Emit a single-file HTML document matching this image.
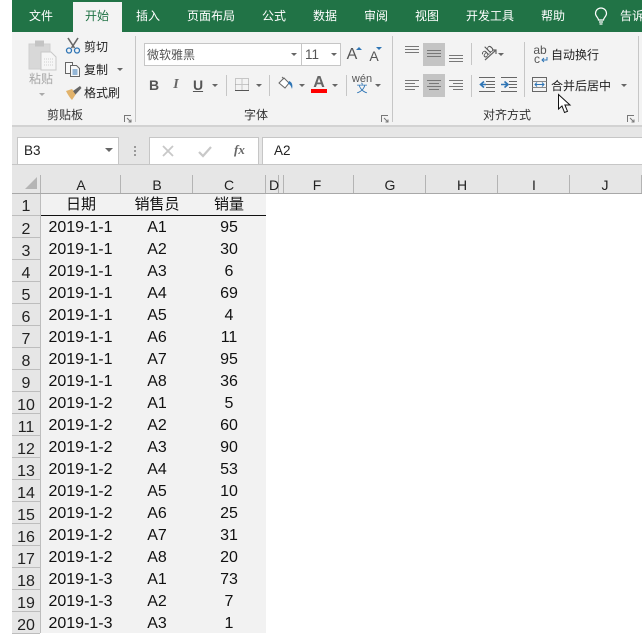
<!DOCTYPE html>
<html lang="zh"><head><meta charset="utf-8"><title>Excel</title>
<style>
html,body{margin:0;padding:0;background:#fff}
body{position:relative;width:642px;height:633px;overflow:hidden;font-family:"Liberation Sans","Noto Sans CJK SC",sans-serif;color:#222}
.a{position:absolute}
.t{position:absolute;white-space:nowrap;font-size:12px;line-height:16px;transform:translateX(-50%)}
.l{position:absolute;white-space:nowrap;font-size:12px;line-height:16px}
.tab{color:#fff;top:8px}
.dd{position:absolute;width:0;height:0;border-left:3px solid transparent;border-right:3px solid transparent;border-top:3px solid #666}
.sep{position:absolute;width:1px;background:#c6c6c6}
.grp{top:107px;color:#333}
.lnc{position:absolute;height:1px;background:#777}
.hl{position:absolute;background:#c4c4c4}
.ch{position:absolute;top:176px;font-size:14px;line-height:18px;transform:translateX(-50%);color:#222}
.cs{position:absolute;top:175px;width:1px;height:18px;background:#b4b4b4}
.rh{position:absolute;left:12px;width:28px;height:21px;background:#e6e6e6;border-bottom:1px solid #bdbdbd;text-align:center;font-size:16px;line-height:20px;color:#222}
.rh span{position:relative;top:4px}
.c{position:absolute;font-size:16px;line-height:22px;margin-top:2px;transform:translateX(-50%);white-space:nowrap;color:#111}
svg{position:absolute;overflow:visible}
</style></head><body>

<!-- title tabs -->
<div class="a" style="left:12px;top:0;width:630px;height:32px;background:#217346"></div>
<div class="a" style="left:73px;top:2px;width:49px;height:31px;background:#f3f3f3"></div>
<div class="t tab" style="left:41px">文件</div>
<div class="t tab" style="left:97px;color:#217346">开始</div>
<div class="t tab" style="left:148px">插入</div>
<div class="t tab" style="left:211px">页面布局</div>
<div class="t tab" style="left:274px">公式</div>
<div class="t tab" style="left:325px">数据</div>
<div class="t tab" style="left:376px">审阅</div>
<div class="t tab" style="left:427px">视图</div>
<div class="t tab" style="left:490px">开发工具</div>
<div class="t tab" style="left:553px">帮助</div>
<svg style="left:594px;top:8px" width="14" height="18" viewBox="0 0 14 18" fill="none" stroke="#fff" stroke-width="1.2"><path d="M4.5 12C4.5 9.5 1.5 8.5 1.5 5.5a5.500 5.500 0 0 1 11 0C12.500 8.500 9.500 9.500 9.500 12Z"/><path d="M5 14h4M5.500 16h3"/></svg>
<div class="l tab" style="left:620px">告诉</div>

<!-- ribbon -->
<div class="a" style="left:12px;top:32px;width:630px;height:93px;background:#f3f3f3"></div>
<div class="a" style="left:12px;top:125px;width:630px;height:2px;background:#d2d2d2"></div>

<!-- clipboard -->
<svg style="left:28px;top:39px" width="30" height="32" viewBox="0 0 30 32"><rect x="1" y="5" width="21" height="25" fill="#d8d8d8" stroke="#cfcfcf"/><rect x="7" y="1.500" width="9" height="6" fill="#c4c4c4"/><path d="M13 13h10l5 5v13H13Z" fill="#f6f6f6" stroke="#c8c8c8"/><path d="M16 20h9M16 23h9M16 26h9" stroke="#d0d0d0" stroke-dasharray="1 1"/></svg>
<div class="t" style="left:41px;top:71px;color:#a6a6a6">粘贴</div>
<div class="dd" style="left:39px;top:93px;border-top-color:#aaa"></div>
<svg style="left:65px;top:37px" width="16" height="17" viewBox="0 0 16 17" fill="none"><path d="M3 1l6.500 10M13 1L6.500 11" stroke="#666" stroke-width="1.600"/><circle cx="4" cy="13.500" r="2.500" stroke="#2f75b5" stroke-width="1.300"/><circle cx="12" cy="13.500" r="2.500" stroke="#2f75b5" stroke-width="1.300"/></svg>
<div class="l" style="left:84px;top:39px">剪切</div>
<svg style="left:65px;top:62px" width="16" height="15" viewBox="0 0 16 15" fill="#f8f8f8" stroke="#666"><path d="M.5.500h7v11h-7Z"/><path d="M5.500 3.500h6l3 3v8h-9Z"/><path d="M7.500 8h5M7.500 10h5M7.500 12h5" stroke="#2f75b5"/></svg>
<div class="l" style="left:84px;top:62px">复制</div>
<div class="dd" style="left:117px;top:68px"></div>
<svg style="left:65px;top:85px" width="17" height="15" viewBox="0 0 17 15"><path d="M1 6l6-2 4 5-4 6C5 13 3 10 1 6Z" fill="#e2b36b"/><path d="M8 6l7-5 1.500 2-6 6.500Z" fill="#666"/></svg>
<div class="l" style="left:84px;top:85px">格式刷</div>
<div class="t grp" style="left:65px">剪贴板</div>
<div class="sep" style="left:135px;top:36px;height:86px"></div>
<svg style="left:124px;top:115px" width="8" height="8" viewBox="0 0 8 8" fill="none" stroke="#777"><path d="M.5 7V.500H7"/><path d="M3 3l4 4M4.500 7H7V4.500"/></svg>

<!-- font -->
<div class="a" style="left:144px;top:43px;width:156px;height:21px;background:#fff;border:1px solid #c6c6c6"></div>
<div class="l" style="left:147px;top:47px;color:#555">微软雅黑</div>
<div class="dd" style="left:291px;top:53px"></div>
<div class="a" style="left:301px;top:43px;width:38px;height:21px;background:#fff;border:1px solid #c6c6c6"></div>
<div class="l" style="left:305px;top:47px;font-size:13.500px;color:#555">11</div>
<div class="dd" style="left:331px;top:53px"></div>
<div class="t" style="left:352px;top:47px;font-size:16px;color:#555">A</div>
<div class="a" style="left:356px;top:47px;width:0;height:0;border-left:3px solid transparent;border-right:3px solid transparent;border-bottom:3px solid #2f75b5"></div>
<div class="t" style="left:374px;top:48px;font-size:14px;color:#555">A</div>
<div class="a" style="left:376px;top:47px;width:0;height:0;border-left:3px solid transparent;border-right:3px solid transparent;border-top:3px solid #2f75b5"></div>
<div class="t" style="left:154px;top:77px;font-size:14px;font-weight:bold;color:#555">B</div>
<div class="t" style="left:176px;top:77px;font-size:14px;font-style:italic;font-family:'Liberation Serif',serif;font-weight:bold;color:#666">I</div>
<div class="t" style="left:198px;top:77px;font-size:14px;font-weight:bold;color:#555;text-decoration:underline">U</div>
<div class="dd" style="left:212px;top:84px"></div>
<div class="sep" style="left:226px;top:75px;height:21px"></div>
<svg style="left:235px;top:78px" width="14" height="13" viewBox="0 0 14 13" fill="none" stroke="#999" stroke-dasharray="1 1"><path d="M.5.500h13v12H.5ZM7 .5v12M.5 6.500h13"/><path d="M0 12.500h14" stroke="#555" stroke-dasharray="none"/></svg>
<div class="dd" style="left:256px;top:84px"></div>
<div class="sep" style="left:269px;top:75px;height:21px"></div>
<svg style="left:278px;top:76px" width="16" height="15" viewBox="0 0 16 15"><path d="M1 7l5-5 5 5-4 5Z" fill="#fff" stroke="#666"/><path d="M4 1l2 2" stroke="#666"/><path d="M11 5c3 1 4 4 3 8-1-3-2-5-4-5Z" fill="#2f75b5"/></svg>
<div class="dd" style="left:299px;top:84px"></div>
<div class="t" style="left:319px;top:75px;font-size:16px;font-weight:bold;color:#666">A</div>
<div class="a" style="left:311px;top:89px;width:16px;height:4px;background:#f00"></div>
<div class="dd" style="left:332px;top:84px"></div>
<div class="sep" style="left:346px;top:75px;height:21px"></div>
<div class="t" style="left:362px;top:73px;font-size:11px;line-height:13px;color:#555">wén</div>
<div class="t" style="left:362px;top:83px;font-size:11px;line-height:13px;color:#2f75b5">文</div>
<div class="dd" style="left:375px;top:84px"></div>
<div class="t grp" style="left:256px">字体</div>
<div class="sep" style="left:392px;top:36px;height:86px"></div>
<svg style="left:381px;top:115px" width="8" height="8" viewBox="0 0 8 8" fill="none" stroke="#777"><path d="M.5 7V.500H7"/><path d="M3 3l4 4M4.500 7H7V4.500"/></svg>

<!-- alignment -->
<div class="hl" style="left:423px;top:43px;width:22px;height:23px"></div>
<div class="hl" style="left:423px;top:74px;width:22px;height:23px"></div>
<div class="lnc" style="left:405px;top:46px;width:14px"></div><div class="lnc" style="left:405px;top:49px;width:14px"></div><div class="lnc" style="left:405px;top:52px;width:14px"></div>
<div class="lnc" style="left:427px;top:50px;width:14px"></div><div class="lnc" style="left:427px;top:53px;width:14px"></div><div class="lnc" style="left:427px;top:56px;width:14px"></div>
<div class="lnc" style="left:449px;top:55px;width:14px"></div><div class="lnc" style="left:449px;top:58px;width:14px"></div><div class="lnc" style="left:449px;top:61px;width:14px"></div>
<div class="lnc" style="left:405px;top:80px;width:14px"></div><div class="lnc" style="left:405px;top:83px;width:10px"></div><div class="lnc" style="left:405px;top:86px;width:14px"></div><div class="lnc" style="left:405px;top:89px;width:10px"></div>
<div class="lnc" style="left:427px;top:80px;width:14px"></div><div class="lnc" style="left:429px;top:83px;width:10px"></div><div class="lnc" style="left:427px;top:86px;width:14px"></div><div class="lnc" style="left:429px;top:89px;width:10px"></div>
<div class="lnc" style="left:449px;top:80px;width:14px"></div><div class="lnc" style="left:453px;top:83px;width:10px"></div><div class="lnc" style="left:449px;top:86px;width:14px"></div><div class="lnc" style="left:453px;top:89px;width:10px"></div>
<div class="sep" style="left:471px;top:43px;height:22px"></div>
<div class="sep" style="left:471px;top:75px;height:22px"></div>
<div class="t" style="left:487px;top:44px;font-size:12px;line-height:14px;color:#555;transform:translateX(-50%) rotate(-45deg)">ab</div>
<svg style="left:484px;top:49px" width="13" height="12" viewBox="0 0 13 12" fill="none" stroke="#666" stroke-width="1.200"><path d="M1 11L12 1M8 1h4v4"/></svg>
<div class="dd" style="left:498px;top:53px"></div>
<svg style="left:479px;top:77px" width="17" height="15" viewBox="0 0 17 15" fill="none"><path d="M0 .500h16M7 4.500h9M7 7.500h9M7 10.500h9M0 14.500h16" stroke="#666"/><path d="M7 7.500H2M5 4.500L1.500 7.500 5 10.500" stroke="#2f75b5" stroke-width="1.600"/></svg>
<svg style="left:501px;top:77px" width="17" height="15" viewBox="0 0 17 15" fill="none"><path d="M0 .500h16M8 4.500h8M8 7.500h8M8 10.500h8M0 14.500h16" stroke="#666"/><path d="M0 7.500h6M3.500 4.500L7 7.500 3.500 10.500" stroke="#2f75b5" stroke-width="1.600"/></svg>
<div class="sep" style="left:524px;top:42px;height:55px"></div>
<div class="t" style="left:540px;top:44px;font-size:12px;line-height:12px;color:#555;letter-spacing:0">ab</div>
<div class="l" style="left:534px;top:53px;font-size:12px;line-height:12px;color:#555">c</div>
<svg style="left:541px;top:57px" width="7" height="6" viewBox="0 0 7 6" fill="none" stroke="#2f75b5"><path d="M6 0v3H1M3 1L1 3l2 2"/></svg>
<div class="l" style="left:551px;top:47px">自动换行</div>
<svg style="left:532px;top:77px" width="16" height="15" viewBox="0 0 16 15" fill="none"><rect x=".5" y=".5" width="14" height="14" stroke="#666"/><path d="M.5 4.500h14M.5 10.500h14" stroke="#888"/><path d="M3 7.500h9M5 5.500l-2 2 2 2M10 5.500l2 2-2 2" stroke="#2f75b5"/></svg>
<div class="l" style="left:551px;top:78px">合并后居中</div>
<div class="dd" style="left:621px;top:84px"></div>
<div class="t grp" style="left:507px">对齐方式</div>
<svg style="left:627px;top:115px" width="8" height="8" viewBox="0 0 8 8" fill="none" stroke="#777"><path d="M.5 7V.500H7"/><path d="M3 3l4 4M4.500 7H7V4.500"/></svg>
<div class="sep" style="left:638px;top:36px;height:86px"></div>
<!-- cursor -->
<svg style="left:558px;top:94px" width="14" height="20" viewBox="0 0 14 20"><path d="M.5.500V15l3.500-3 2.500 6.500 3-1.200-2.600-6.300H12Z" fill="#fff" stroke="#111"/></svg>

<!-- formula bar -->
<div class="a" style="left:12px;top:127px;width:630px;height:50px;background:#e6e6e6"></div>
<div class="a" style="left:17px;top:137px;width:100px;height:26px;background:#fff;border:1px solid #c6c6c6"></div>
<div class="l" style="left:24px;top:143px;font-size:13.500px;color:#222">B3</div>
<div class="dd" style="left:105px;top:148px;border-left-width:4px;border-right-width:4px;border-top-width:4px"></div>
<div class="a" style="left:134px;top:146px;width:2px;height:2px;background:#999;box-shadow:0 4px #999,0 8px #999"></div>
<div class="a" style="left:149px;top:137px;width:108px;height:26px;background:#fff;border:1px solid #c6c6c6"></div>
<svg style="left:162px;top:145px" width="12" height="12" viewBox="0 0 12 12" stroke="#c8c8c8" stroke-width="1.800"><path d="M1 1l10 10M11 1L1 11"/></svg>
<svg style="left:198px;top:146px" width="14" height="11" viewBox="0 0 14 11" fill="none" stroke="#c8c8c8" stroke-width="2.200"><path d="M1 6l4 4 8-9"/></svg>
<div class="l" style="left:234px;top:142px;font-family:'Liberation Serif',serif;font-style:italic;font-weight:bold;font-size:13px;color:#666">fx</div>
<div class="a" style="left:262px;top:137px;width:385px;height:26px;background:#fff;border:1px solid #c6c6c6"></div>
<div class="l" style="left:274px;top:143px;font-size:13.500px;color:#222">A2</div>
<div class="a" style="left:12px;top:164px;width:630px;height:1px;background:#c6c6c6"></div>

<!-- column headers -->
<div class="a" style="left:12px;top:165px;width:630px;height:28px;background:#e6e6e6"></div>
<div class="a" style="left:12px;top:164px;width:630px;height:1px;background:#c6c6c6"></div>
<div class="a" style="left:12px;top:193px;width:630px;height:1px;background:#a8a8a8"></div>
<svg style="left:25px;top:177px" width="12" height="12" viewBox="0 0 12 12"><path d="M12 0V12H0Z" fill="#b5b5b5"/></svg>
<div class="cs" style="left:40px"></div><div class="cs" style="left:120px"></div><div class="cs" style="left:192px"></div><div class="cs" style="left:265px"></div><div class="cs" style="left:278px"></div><div class="cs" style="left:283px"></div><div class="cs" style="left:353px"></div><div class="cs" style="left:425px"></div><div class="cs" style="left:497px"></div><div class="cs" style="left:569px"></div><div class="cs" style="left:641px"></div>
<div class="ch" style="left:81px">A</div><div class="ch" style="left:157px">B</div><div class="ch" style="left:229px">C</div><div class="ch" style="left:274px">D</div><div class="ch" style="left:317px">F</div><div class="ch" style="left:390px">G</div><div class="ch" style="left:462px">H</div><div class="ch" style="left:534px">I</div><div class="ch" style="left:605px">J</div>

<!-- data bg -->
<div class="a" style="left:41px;top:194px;width:225px;height:439px;background:#f2f2f2"></div>
<div class="a" style="left:40px;top:215px;width:226px;height:1px;background:#111"></div>
<div class="a" style="left:40px;top:194px;width:1px;height:439px;background:#bdbdbd"></div>

<!-- row headers -->
<div class="rh" style="top:194px"><span style="top:3px">1</span></div>
<div class="rh" style="top:216px"><span>2</span></div>
<div class="rh" style="top:238px"><span>3</span></div>
<div class="rh" style="top:260px"><span>4</span></div>
<div class="rh" style="top:282px"><span>5</span></div>
<div class="rh" style="top:304px"><span>6</span></div>
<div class="rh" style="top:326px"><span>7</span></div>
<div class="rh" style="top:348px"><span>8</span></div>
<div class="rh" style="top:370px"><span>9</span></div>
<div class="rh" style="top:392px"><span>10</span></div>
<div class="rh" style="top:414px"><span>11</span></div>
<div class="rh" style="top:436px"><span>12</span></div>
<div class="rh" style="top:458px"><span>13</span></div>
<div class="rh" style="top:480px"><span>14</span></div>
<div class="rh" style="top:502px"><span>15</span></div>
<div class="rh" style="top:524px"><span>16</span></div>
<div class="rh" style="top:546px"><span>17</span></div>
<div class="rh" style="top:568px"><span>18</span></div>
<div class="rh" style="top:590px"><span>19</span></div>
<div class="rh" style="top:612px"><span>20</span></div>

<!-- data -->
<div class="c" style="left:81px;top:192px;font-size:15px">日期</div><div class="c" style="left:157px;top:192px;font-size:15px">销售员</div><div class="c" style="left:229px;top:192px;font-size:15px">销量</div>
<div class="c" style="left:80.500px;top:215px">2019-1-1</div><div class="c" style="left:157px;top:215px">A1</div><div class="c" style="left:229px;top:215px">95</div>
<div class="c" style="left:80.500px;top:237px">2019-1-1</div><div class="c" style="left:157px;top:237px">A2</div><div class="c" style="left:229px;top:237px">30</div>
<div class="c" style="left:80.500px;top:259px">2019-1-1</div><div class="c" style="left:157px;top:259px">A3</div><div class="c" style="left:229px;top:259px">6</div>
<div class="c" style="left:80.500px;top:281px">2019-1-1</div><div class="c" style="left:157px;top:281px">A4</div><div class="c" style="left:229px;top:281px">69</div>
<div class="c" style="left:80.500px;top:303px">2019-1-1</div><div class="c" style="left:157px;top:303px">A5</div><div class="c" style="left:229px;top:303px">4</div>
<div class="c" style="left:80.500px;top:325px">2019-1-1</div><div class="c" style="left:157px;top:325px">A6</div><div class="c" style="left:229px;top:325px">11</div>
<div class="c" style="left:80.500px;top:347px">2019-1-1</div><div class="c" style="left:157px;top:347px">A7</div><div class="c" style="left:229px;top:347px">95</div>
<div class="c" style="left:80.500px;top:369px">2019-1-1</div><div class="c" style="left:157px;top:369px">A8</div><div class="c" style="left:229px;top:369px">36</div>
<div class="c" style="left:80.500px;top:391px">2019-1-2</div><div class="c" style="left:157px;top:391px">A1</div><div class="c" style="left:229px;top:391px">5</div>
<div class="c" style="left:80.500px;top:413px">2019-1-2</div><div class="c" style="left:157px;top:413px">A2</div><div class="c" style="left:229px;top:413px">60</div>
<div class="c" style="left:80.500px;top:435px">2019-1-2</div><div class="c" style="left:157px;top:435px">A3</div><div class="c" style="left:229px;top:435px">90</div>
<div class="c" style="left:80.500px;top:457px">2019-1-2</div><div class="c" style="left:157px;top:457px">A4</div><div class="c" style="left:229px;top:457px">53</div>
<div class="c" style="left:80.500px;top:479px">2019-1-2</div><div class="c" style="left:157px;top:479px">A5</div><div class="c" style="left:229px;top:479px">10</div>
<div class="c" style="left:80.500px;top:501px">2019-1-2</div><div class="c" style="left:157px;top:501px">A6</div><div class="c" style="left:229px;top:501px">25</div>
<div class="c" style="left:80.500px;top:523px">2019-1-2</div><div class="c" style="left:157px;top:523px">A7</div><div class="c" style="left:229px;top:523px">31</div>
<div class="c" style="left:80.500px;top:545px">2019-1-2</div><div class="c" style="left:157px;top:545px">A8</div><div class="c" style="left:229px;top:545px">20</div>
<div class="c" style="left:80.500px;top:567px">2019-1-3</div><div class="c" style="left:157px;top:567px">A1</div><div class="c" style="left:229px;top:567px">73</div>
<div class="c" style="left:80.500px;top:589px">2019-1-3</div><div class="c" style="left:157px;top:589px">A2</div><div class="c" style="left:229px;top:589px">7</div>
<div class="c" style="left:80.500px;top:611px">2019-1-3</div><div class="c" style="left:157px;top:611px">A3</div><div class="c" style="left:229px;top:611px">1</div>
</body></html>
